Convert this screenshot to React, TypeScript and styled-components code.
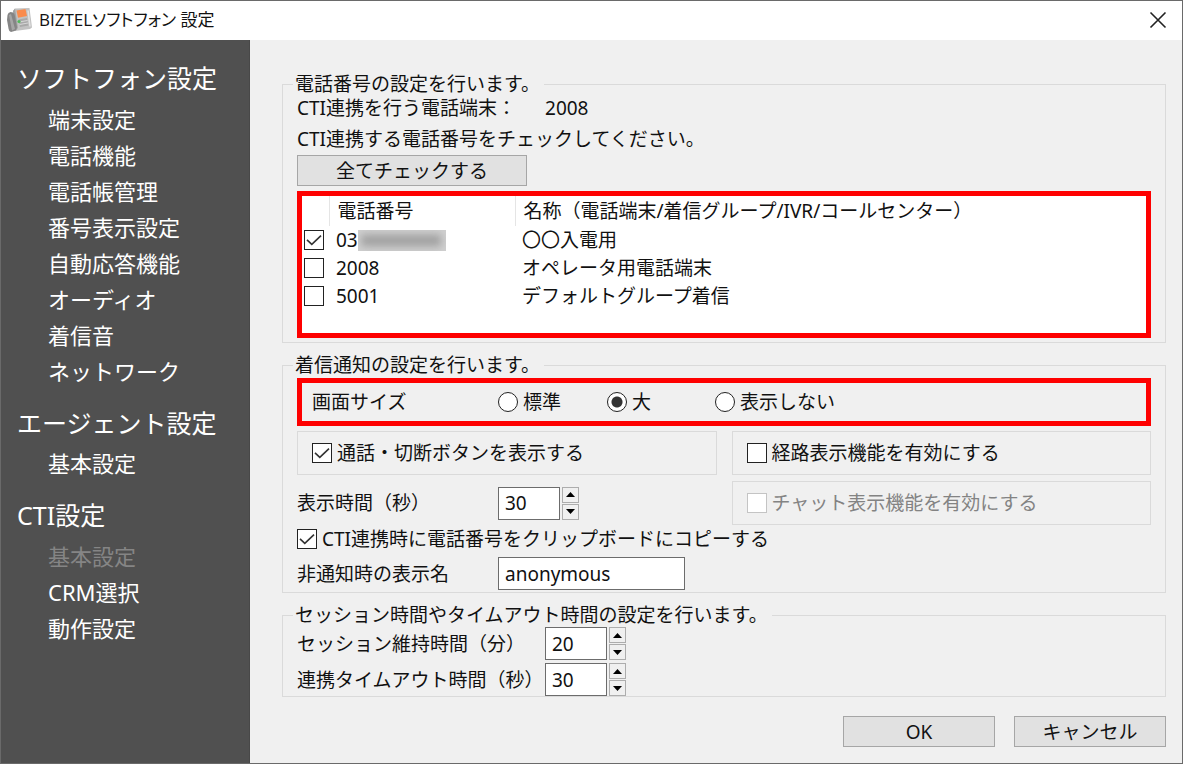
import React, { useState } from "react";
import styled, { createGlobalStyle, css } from "styled-components";

const GlobalStyle = createGlobalStyle`
  *, *::before, *::after { box-sizing: border-box; }
  body {
    margin: 0;
    background: #f0f0f0;
    color: #111;
    font-family: "Noto Sans", "Noto Sans CJK JP", sans-serif;
    font-size: 19px;
    line-height: 24px;
  }
  button, input { font: inherit; color: inherit; margin: 0; }
`;

const Window = styled.div`
  display: flex;
  flex-direction: column;
  min-height: 100vh;
  border: 1px solid #6a6a6a;
`;

const TitleBar = styled.header`
  display: flex;
  align-items: center;
  gap: 7px;
  height: 39px;
  padding: 0 14px 2px 5px;
  background: #fff;
`;

const Title = styled.h1`
  flex: 1;
  margin: 0;
  font-family: "Open Sans", "Noto Sans CJK JP", sans-serif;
  font-feature-settings: "palt";
  font-size: 17px;
  font-weight: 400;
`;

const CloseButton = styled.button`
  display: flex;
  padding: 0;
  border: 0;
  background: none;
`;

const Body = styled.div`
  display: flex;
  flex: 1;
`;

const Sidebar = styled.nav`
  flex: 0 0 249px;
  padding: 18px 0 18px 16px;
  border-right: 1px solid #484848;
  background: #505050;
  color: #fff;
`;

const SidebarSection = styled.section`
  & + & { margin-top: 14px; }
`;

const SidebarHeading = styled.h2<{ $tight?: boolean }>`
  margin: 0 0 ${(p) => (p.$tight ? 2 : 3)}px;
  font-size: 25px;
  font-weight: 400;
  line-height: 40px;
`;

const SidebarList = styled.ul`
  margin: 0;
  padding: 0 0 0 31px;
  list-style: none;
  font-size: 22px;
  line-height: 36px;
`;

const SidebarLink = styled.a`
  color: #fff;
  text-decoration: none;
`;

const SidebarCurrent = styled.span`
  color: #858585;
`;

const Main = styled.main`
  flex: 1;
  min-width: 0;
  padding: 32px 16px 16px 32px;
`;

const Group = styled.fieldset<{ $bottom: number }>`
  min-width: 0;
  margin: 0 0 10px;
  padding: 0 14px ${(p) => p.$bottom}px;
  border: 1px solid #dadada;
`;

const Legend = styled.legend`
  margin-left: -4px;
  padding: 0 4px 0 2px;
`;

const TextLine = styled.p`
  display: flex;
  margin: 0 0 7px;
`;

const PlainOutput = styled.output`
  margin-left: 29px;
`;

const Instruction = styled.p`
  margin: 0 0 4px;
`;

const PushButton = styled.button<{ $width: number }>`
  display: block;
  width: ${(p) => p.$width}px;
  height: 31px;
  padding: 0;
  border: 1px solid #a6a6a6;
  background: #e1e1e1;
  line-height: 24px;
`;

const highlight = css`
  border: 5px solid #fe0000;
`;

const TableFrame = styled.div`
  ${highlight}
  min-height: 147px;
  margin-top: 5px;
  background: #fff;
`;

const NumberTable = styled.table`
  width: 100%;
  border-collapse: collapse;
  table-layout: fixed;

  th, td {
    height: 28px;
    padding: 0 0 0 7px;
    font-weight: 400;
    text-align: left;
    white-space: nowrap;
  }
  th { height: 30px; padding-left: 8px; }
  th:not(:last-child) { border-right: 1px solid #e5e5e5; }
  td:first-child { padding: 0 0 0 2px; }
`;

const NumberCell = styled.label`
  display: flex;
  align-items: center;
`;

const Masked = styled.span`
  width: 88px;
  height: 21px;
  overflow: hidden;
  background: #d0d0d0;

  &::before {
    content: "";
    display: block;
    height: 11px;
    margin: 5px 4px;
    background: repeating-linear-gradient(90deg, #929292 0 7px, #b8b8b8 7px 10px);
    filter: blur(4px);
  }
`;

const Check = styled.input.attrs({ type: "checkbox" })`
  appearance: none;
  display: block;
  flex: none;
  width: 20px;
  height: 20px;
  border: 1px solid #222;
  background: #fff;

  &:checked {
    background: #fff
      url("data:image/svg+xml,%3Csvg xmlns='http://www.w3.org/2000/svg' viewBox='0 0 18 18'%3E%3Cpath d='M2 8.8 6.8 13.4 16 4.6' fill='none' stroke='%23333' stroke-width='1.6'/%3E%3C/svg%3E")
      center / 18px 18px no-repeat;
  }
  &:disabled { border-color: #c4c4c4; }
`;

const Radio = styled.input.attrs({ type: "radio" })`
  appearance: none;
  flex: none;
  width: 20px;
  height: 20px;
  border: 1px solid #222;
  border-radius: 50%;
  background: #fff;

  &:checked { background: radial-gradient(circle, #333 5px, #fff 6px); }
`;

const ChoiceLabel = styled.label<{ $disabled?: boolean }>`
  display: flex;
  align-items: center;
  gap: 5px;
  white-space: nowrap;
  color: ${(p) => (p.$disabled ? "#838383" : "inherit")};
`;

const SizeRow = styled.div`
  ${highlight}
  display: grid;
  grid-template-columns: 186px 109px 108px 1fr;
  align-items: center;
  height: 48px;
  margin: 1px 0 5px;
  padding-left: 10px;
`;

const OptionGrid = styled.div`
  display: grid;
  grid-template-columns: 1fr 1fr;
  gap: 6px 15px;
  margin-bottom: 2px;
`;

const OptionBox = styled.div`
  display: flex;
  align-items: center;
  height: 44px;
  padding-left: 14px;
  border: 1px solid #dadada;
`;

const FieldRow = styled.div<{ $label?: number }>`
  display: grid;
  grid-template-columns: ${(p) => p.$label ?? 201}px auto;
  justify-content: start;
  align-items: center;

  & + & { margin-top: 3px; }
`;

const ClipboardRow = styled.div`
  margin-bottom: 6px;
`;

const TextBox = styled.input<{ $width: number }>`
  appearance: textfield;
  width: ${(p) => p.$width}px;
  height: 33px;
  padding: 0 6px;
  border: 1px solid #6c6c6c;
  border-radius: 0;
  background: #fff;

  &::-webkit-inner-spin-button { display: none; }
`;

const SpinnerRow = styled.div`
  display: flex;
  align-items: center;
  gap: 2px;
`;

const SpinButtons = styled.div`
  display: flex;
  flex-direction: column;
  gap: 1px;
`;

const SpinButton = styled.button`
  display: flex;
  align-items: center;
  justify-content: center;
  width: 17px;
  height: 16px;
  padding: 0;
  border: 1px solid #adadad;
  background: #f0f0f0;
`;

const Footer = styled.footer`
  display: flex;
  justify-content: flex-end;
  gap: 19px;
  margin-top: 19px;
`;

function PhoneIcon() {
  return (
    <svg width="26" height="26" viewBox="0 0 26 26" aria-hidden="true">
      <path d="M7 4 9 1.500 23.500 1 26 20.500 24 22 9 24Z" fill="#c2c2c2" />
      <path d="M7 4 9 1.500 12 21 9 24Z" fill="#a2a2a2" />
      <path d="M1.500 8Q2 5.500 4.500 5L7 5.500Q8.500 6 9 9L11 20Q11 23 8.500 24L5 25Q3 24.500 2.600 22L1 13Z" fill="#858585" />
      <path d="M3 8 5 7 9 22 6 23.500Z" fill="#a6a6a6" />
      <path d="M10.500 3.500 19.500 2 21 9 12 10.700Z" fill="#fa8b4d" />
      <path d="M12.500 12.500 21 11 22.500 18.500 14 20Z" fill="#a9a9a9" />
      <path d="M13 15 21.500 13.500M13.500 17.500 22 16" stroke="#d8d8d8" strokeWidth="1" />
      <circle cx="13" cy="14.500" r="1.600" fill="#50b95a" />
      <path d="M22 3.500 24 19.500" stroke="#e2e2e2" strokeWidth="1.500" />
    </svg>
  );
}

function CloseIcon() {
  return (
    <svg width="20" height="20" viewBox="0 0 20 20" aria-hidden="true">
      <path d="M2.500 2.500 17.500 17.500M17.500 2.500 2.500 17.500" stroke="#222" strokeWidth="1.600" />
    </svg>
  );
}

function Arrow({ down }: { down?: boolean }) {
  return (
    <svg width="9" height="5" viewBox="0 0 9 5" aria-hidden="true">
      <path d={down ? "M0 0H9L4.500 5Z" : "M0 5H9L4.500 0Z"} fill="#000" />
    </svg>
  );
}

function Spinner({ id, initial }: { id: string; initial: number }) {
  const [value, setValue] = useState(initial);
  return (
    <SpinnerRow>
      <TextBox
        id={id}
        type="number"
        $width={62}
        value={value}
        onChange={(e) => setValue(Number(e.target.value))}
      />
      <SpinButtons>
        <SpinButton type="button" aria-label="増やす" onClick={() => setValue(value + 1)}>
          <Arrow />
        </SpinButton>
        <SpinButton type="button" aria-label="減らす" onClick={() => setValue(value - 1)}>
          <Arrow down />
        </SpinButton>
      </SpinButtons>
    </SpinnerRow>
  );
}

const sections = [
  {
    title: "ソフトフォン設定",
    items: [
      "端末設定",
      "電話機能",
      "電話帳管理",
      "番号表示設定",
      "自動応答機能",
      "オーディオ",
      "着信音",
      "ネットワーク",
    ],
  },
  { title: "エージェント設定", tight: true, items: ["基本設定"] },
  { title: "CTI設定", current: "基本設定", items: ["基本設定", "CRM選択", "動作設定"] },
];

const lines = [
  { number: "03", masked: true, name: "〇〇入電用" },
  { number: "2008", name: "オペレータ用電話端末" },
  { number: "5001", name: "デフォルトグループ着信" },
];

const sizes = ["標準", "大", "表示しない"];

export default function App() {
  const [checked, setChecked] = useState([true, false, false]);
  const [size, setSize] = useState("大");

  return (
    <Window>
      <GlobalStyle />
      <TitleBar>
        <PhoneIcon />
        <Title>BIZTELソフトフォン 設定</Title>
        <CloseButton type="button" aria-label="閉じる">
          <CloseIcon />
        </CloseButton>
      </TitleBar>
      <Body>
        <Sidebar>
          {sections.map((section) => (
            <SidebarSection key={section.title}>
              <SidebarHeading $tight={section.tight}>{section.title}</SidebarHeading>
              <SidebarList>
                {section.items.map((item) => (
                  <li key={item}>
                    {item === section.current ? (
                      <SidebarCurrent aria-current="page">{item}</SidebarCurrent>
                    ) : (
                      <SidebarLink href="#">{item}</SidebarLink>
                    )}
                  </li>
                ))}
              </SidebarList>
            </SidebarSection>
          ))}
        </Sidebar>
        <Main>
          <Group $bottom={4}>
            <Legend>電話番号の設定を行います。</Legend>
            <TextLine>
              CTI連携を行う電話端末：
              <PlainOutput>2008</PlainOutput>
            </TextLine>
            <Instruction>CTI連携する電話番号をチェックしてください。</Instruction>
            <PushButton
              type="button"
              $width={230}
              onClick={() => setChecked(checked.map(() => true))}
            >
              全てチェックする
            </PushButton>
            <TableFrame>
              <NumberTable>
                <colgroup>
                  <col width="27" />
                  <col width="186" />
                  <col />
                </colgroup>
                <thead>
                  <tr>
                    <th aria-label="選択" />
                    <th>電話番号</th>
                    <th>名称（電話端末/着信グループ/IVR/コールセンター）</th>
                  </tr>
                </thead>
                <tbody>
                  {lines.map((line, i) => (
                    <tr key={line.number}>
                      <td>
                        <Check
                          id={`line-${i}`}
                          checked={checked[i]}
                          onChange={() =>
                            setChecked(checked.map((c, j) => (j === i ? !c : c)))
                          }
                        />
                      </td>
                      <td>
                        <NumberCell htmlFor={`line-${i}`}>
                          {line.number}
                          {line.masked && <Masked />}
                        </NumberCell>
                      </td>
                      <td>{line.name}</td>
                    </tr>
                  ))}
                </tbody>
              </NumberTable>
            </TableFrame>
          </Group>

          <Group $bottom={2}>
            <Legend>着信通知の設定を行います。</Legend>
            <SizeRow role="radiogroup" aria-labelledby="size-label">
              <span id="size-label">画面サイズ</span>
              {sizes.map((s) => (
                <ChoiceLabel key={s}>
                  <Radio name="size" checked={size === s} onChange={() => setSize(s)} />
                  {s}
                </ChoiceLabel>
              ))}
            </SizeRow>
            <OptionGrid>
              <OptionBox>
                <ChoiceLabel>
                  <Check defaultChecked />
                  通話・切断ボタンを表示する
                </ChoiceLabel>
              </OptionBox>
              <OptionBox>
                <ChoiceLabel>
                  <Check />
                  経路表示機能を有効にする
                </ChoiceLabel>
              </OptionBox>
              <FieldRow>
                <label htmlFor="display-time">表示時間（秒）</label>
                <Spinner id="display-time" initial={30} />
              </FieldRow>
              <OptionBox>
                <ChoiceLabel $disabled>
                  <Check disabled />
                  チャット表示機能を有効にする
                </ChoiceLabel>
              </OptionBox>
            </OptionGrid>
            <ClipboardRow>
              <ChoiceLabel>
                <Check defaultChecked />
                CTI連携時に電話番号をクリップボードにコピーする
              </ChoiceLabel>
            </ClipboardRow>
            <FieldRow>
              <label htmlFor="anonymous-name">非通知時の表示名</label>
              <TextBox id="anonymous-name" type="text" $width={187} defaultValue="anonymous" />
            </FieldRow>
          </Group>

          <Group $bottom={0}>
            <Legend>セッション時間やタイムアウト時間の設定を行います。</Legend>
            <FieldRow $label={248}>
              <label htmlFor="session-time">セッション維持時間（分）</label>
              <Spinner id="session-time" initial={20} />
            </FieldRow>
            <FieldRow $label={248}>
              <label htmlFor="timeout">連携タイムアウト時間（秒）</label>
              <Spinner id="timeout" initial={30} />
            </FieldRow>
          </Group>

          <Footer>
            <PushButton type="button" $width={152}>OK</PushButton>
            <PushButton type="button" $width={152}>キャンセル</PushButton>
          </Footer>
        </Main>
      </Body>
    </Window>
  );
}
